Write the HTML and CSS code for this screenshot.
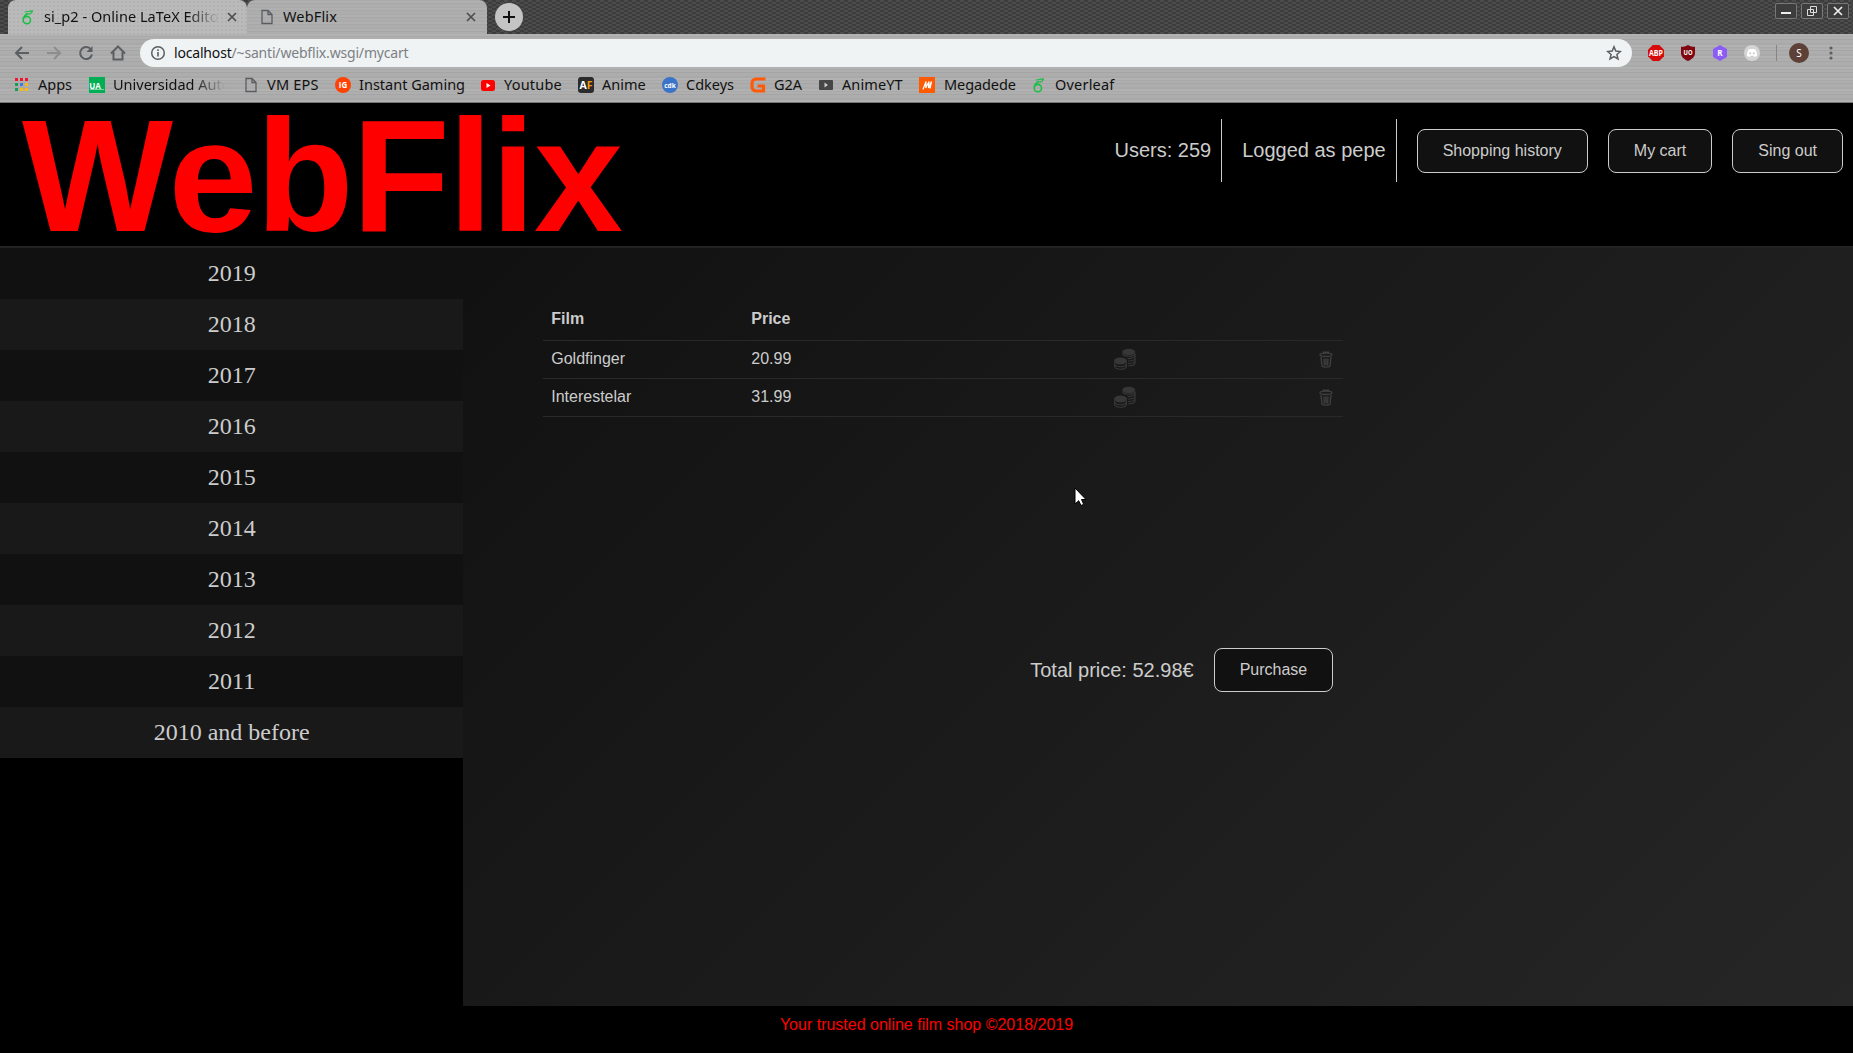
FILE: index.html
```html
<!DOCTYPE html>
<html lang="en">
<head>
<meta charset="utf-8">
<title>WebFlix</title>
<link rel="stylesheet" href="styles.css">
</head>
<body>
<svg class="defs" width="0" height="0">
  <symbol id="overleaf" viewBox="0 0 12 16"><path d="M6.500 3.600C3.500 4.800 1.300 8 1.300 11a4 4 0 1 0 4-4.200C4 6.800 2.800 7.500 2 8.600" fill="none" stroke="#17bf45" stroke-width="1.700"/><path d="M3 1.800C5 2.600 8 .6 11.500.8 11 3.300 8.500 4.500 6 4" fill="none" stroke="#17bf45" stroke-width="1.200"/></symbol>
  <symbol id="page" viewBox="0 0 12 16"><path d="M1 1.500h6l4 4v9H1zM7 1.500v4h4" fill="none" stroke="#5a5c5f" stroke-width="1.300"/></symbol>
  <symbol id="cross" viewBox="0 0 10 10"><path d="M1 1l8 8M9 1L1 9" stroke="#4c4e50" stroke-width="1.700"/></symbol>
  <symbol id="coins" viewBox="0 0 22 22">
    <g fill="#373737"><ellipse cx="14.700" cy="4" rx="6.500" ry="3.300"/><ellipse cx="6.500" cy="13" rx="6.500" ry="3.500"/></g>
    <g fill="none" stroke="#373737" stroke-width="1.100"><path d="M8.300 5.500c1 3.600 11.800 3.600 12.800 0v2.300c-.6 2.100-4.500 3-7.500 2.700M14 13c3.500.2 6.500-.8 7.100-2.600V8M14 15.500c3.500.2 6.500-.8 7.100-2.600v-2.500M14 17.700c3.500.2 6.500-.8 7.100-2.500v-2.500"/><path d="M.5 14.500v4c1 3.600 11 3.600 12 0v-4M.5 16c1 3.600 11 3.600 12 0"/></g>
  </symbol>
  <symbol id="trash" viewBox="0 0 14 17"><g fill="none" stroke="#3f3f3f" stroke-width="1.400"><ellipse cx="7" cy="3.800" rx="6" ry="1.700"/><path d="M4.500 3V1.200h5V3M2 6l1 9.200c1.500 1.200 6.500 1.200 8 0L12 6M5 7.500l.4 7M7 7.500v7M9 7.500l-.4 7"/></g></symbol>
</svg>

<div class="tabstrip">
  <div class="tab tab-back">
    <svg class="tab-icon" width="11" height="15"><use href="#overleaf"/></svg>
    <span class="tab-title fade"><span class="t-a">si_p2 - Online LaTeX Edito</span></span>
    <svg class="tab-close" width="10" height="10"><use href="#cross"/></svg>
  </div>
  <div class="tab tab-active">
    <svg class="tab-icon" width="12" height="16"><use href="#page"/></svg>
    <span class="tab-title">WebFlix</span>
    <svg class="tab-close" width="10" height="10"><use href="#cross"/></svg>
  </div>
  <svg class="newtab" width="28" height="28"><circle cx="14" cy="14" r="14" fill="#c4c4c4"/><path d="M14 8v12M8 14h12" stroke="#111" stroke-width="2"/></svg>
  <div class="winbtns">
    <span class="winbtn"><svg width="20" height="14"><path d="M5 9h10" stroke="#eee" stroke-width="2"/></svg></span>
    <span class="winbtn"><svg width="20" height="14"><path d="M8.500 2.500h6v6h-6zM5.500 5.500h6v6h-6z" fill="none" stroke="#ddd"/></svg></span>
    <span class="winbtn"><svg width="20" height="14"><path d="M6 3l8 8M14 3l-8 8" stroke="#eee" stroke-width="1.700"/></svg></span>
  </div>
</div>

<div class="chrome">
  <div class="toolbar">
    <div class="nav">
      <svg width="16" height="16"><path d="M15 8H2M8 2L2 8l6 6" fill="none" stroke="#5b5e62" stroke-width="2"/></svg>
      <svg width="16" height="16"><path d="M1 8h13M8 2l6 6-6 6" fill="none" stroke="#8c8d8f" stroke-width="2"/></svg>
      <svg width="16" height="16"><path d="M13 4.500A6 6 0 1 0 14 9.500" fill="none" stroke="#5b5e62" stroke-width="2"/><path d="M14.500 1v6h-6z" fill="#5b5e62"/></svg>
      <svg width="16" height="16"><path d="M1 8.500L8 1.500l7 7M3.500 7v7.500h9V7" fill="none" stroke="#5b5e62" stroke-width="2"/></svg>
    </div>
    <div class="urlbar">
      <svg width="16" height="16"><circle cx="8" cy="8" r="6.300" fill="none" stroke="#5b5e62" stroke-width="1.500"/><path d="M8 7v4.500M8 4.300v1.700" stroke="#5b5e62" stroke-width="1.600"/></svg>
      <span class="url">localhost<span class="path">/~santi/webflix.wsgi/mycart</span></span>
      <svg class="star" width="16" height="16"><path d="M8 1.800l1.800 4.300 4.600.4-3.500 3 1.100 4.500L8 11.600 4 14l1.100-4.500-3.500-3 4.600-.4z" fill="none" stroke="#5b5e62" stroke-width="1.500"/></svg>
    </div>
    <div class="exts">
      <svg width="16" height="16"><path d="M4.700 0h6.600L16 4.700v6.600L11.300 16H4.700L0 11.300V4.700z" fill="#d60a0a"/><text x="8" y="10.800" class="g g8" textLength="14" lengthAdjust="spacingAndGlyphs">ABP</text></svg>
      <svg width="16" height="16"><path d="M8 0c2 1.300 4.500 1.800 7 1.800V8c0 4-3.500 6.500-7 8-3.500-1.500-7-4-7-8V1.800C3.500 1.800 6 1.300 8 0z" fill="#800610"/><text x="8" y="10.300" class="g g7" textLength="9" lengthAdjust="spacingAndGlyphs">UO</text></svg>
      <svg width="16" height="16"><path d="M8 0l7 4v8l-7 4-7-4V4z" fill="#8b5cf6"/><text x="8" y="11" class="g g8">R</text></svg>
      <svg width="16" height="16"><circle cx="8" cy="8" r="8" fill="#d4d4d4"/><path d="M4.500 4.500Q8 3.300 11.500 4.500 13.500 8 13 11l-2.500 1-1-1.200h-3l-1 1.200L3 11q-.5-3 1.500-6.500z" fill="#fff"/><circle cx="6.200" cy="8.300" r="1.100" fill="#ccc"/><circle cx="9.800" cy="8.300" r="1.100" fill="#ccc"/></svg>
    </div>
    <span class="sep"></span>
    <span class="avatar">S</span>
    <svg class="dots" width="4" height="16" fill="#5b5e62"><circle cx="2" cy="3" r="1.600"/><circle cx="2" cy="8" r="1.600"/><circle cx="2" cy="13" r="1.600"/></svg>
  </div>

  <div class="bookmarks">
    <a class="bm bm-apps"><svg width="14" height="14"><path d="M0 0h3v3H0zM5 0h3v3H5zM10 0h3v3h-3z" fill="#f0142f"/><path d="M0 5h3v3H0zM0 10h3v3H0z" fill="#13a052"/><path d="M5 5h3v3H5z" fill="#3d7bea"/><path d="M10 5h3v3h-3zM5 10h3v3H5zM10 10h3v3h-3z" fill="#fdb90b"/></svg><span>Apps</span></a>
    <a class="bm bm-uam"><svg width="16" height="16"><path d="M0 0h16v16H0z" fill="#00ae54"/><text x="6" y="11.500" class="g g8">UA</text><path d="M1 12.500h14" stroke="#7fd6a6"/></svg><span class="fade">Universidad Auto</span></a>
    <a class="bm bm-vm"><svg width="12" height="16"><use href="#page"/></svg><span>VM EPS</span></a>
    <a class="bm bm-ig"><svg width="16" height="16"><circle cx="8" cy="8" r="8" fill="#ff4200"/><text x="8" y="11" class="g g8">IG</text></svg><span>Instant Gaming</span></a>
    <a class="bm bm-yt"><svg width="14" height="16"><rect y="3" width="14" height="11" rx="2.500" fill="#f00"/><path d="M5.500 6v5L9.500 8.500z" fill="#fff"/></svg><span>Youtube</span></a>
    <a class="bm bm-af"><svg width="16" height="16"><rect width="16" height="16" rx="3" fill="#2b2b2b"/><text x="8" y="12.300" class="g g11" textLength="13" lengthAdjust="spacingAndGlyphs">A<tspan fill="#f39a12">F</tspan></text></svg><span>Anime</span></a>
    <a class="bm bm-cdk"><svg width="16" height="16"><circle cx="8" cy="8" r="8" fill="#3b73c8"/><text x="8" y="10.700" class="g g7" textLength="11.500" lengthAdjust="spacingAndGlyphs">cdk</text></svg><span>Cdkeys</span></a>
    <a class="bm bm-g2a"><svg width="16" height="16"><path d="M15.500 2H6.500Q2 2 2 6.500v3Q2 14 6.500 14h7V9H7.500" fill="none" stroke="#ff5a0a" stroke-width="3.200"/></svg><span>G2A</span></a>
    <a class="bm bm-ayt"><svg width="14" height="16"><rect y="3" width="14" height="10" rx="1" fill="#464646"/><path d="M5.500 5.500v5L9 8z" fill="#ccc"/></svg><span>AnimeYT</span></a>
    <a class="bm bm-mega"><svg width="16" height="16"><path d="M0 0h16v16H0z" fill="#ff5a00"/><path d="M4 12.500L7 4.500l-.2 6.500L10 4.500l-.5 6.500 3-6.500-1.500 7" fill="none" stroke="#fff" stroke-width="1.200"/></svg><span>Megadede</span></a>
    <a class="bm bm-ovl"><svg width="11" height="15"><use href="#overleaf"/></svg><span>Overleaf</span></a>
  </div>
</div>

<header class="site-header">
  <h1 class="logo">WebFlix</h1>
  <div class="account">
    <span class="stat">Users: 259</span>
    <span class="stat stat-user">Logged as pepe</span>
    <a class="btn">Shopping history</a>
    <a class="btn">My cart</a>
    <a class="btn">Sing out</a>
  </div>
</header>

<div class="content">
  <nav class="years">
    <a>2019</a><a>2018</a><a>2017</a><a>2016</a><a>2015</a><a>2014</a><a>2013</a><a>2012</a><a>2011</a><a>2010 and before</a>
  </nav>
  <main class="cart">
    <table>
      <thead><tr><th>Film</th><th>Price</th><th></th><th></th></tr></thead>
      <tbody>
        <tr><td>Goldfinger</td><td>20.99</td><td class="c-coins"><svg width="22" height="22"><use href="#coins"/></svg></td><td class="c-trash"><svg width="14" height="17"><use href="#trash"/></svg></td></tr>
        <tr><td>Interestelar</td><td>31.99</td><td class="c-coins"><svg width="22" height="22"><use href="#coins"/></svg></td><td class="c-trash"><svg width="14" height="17"><use href="#trash"/></svg></td></tr>
      </tbody>
    </table>
    <div class="checkout"><span class="total">Total price: 52.98€</span><a class="btn">Purchase</a></div>
  </main>
</div>
<footer class="site-footer">Your trusted online film shop ©2018/2019</footer>
<svg class="cursor" width="14" height="20"><path d="M1 1v16l3.700-3.300L7 18.500l2.700-1.200L7.500 12.500H12z" fill="#fff" stroke="#000"/></svg>
</body>
</html>
```

FILE: styles.css
```css
* { box-sizing: border-box; }
body { margin: 0; width: 1853px; height: 1053px; overflow: hidden; display: flex; flex-direction: column; background: #000; color: #ccc; font: 16px/24px "Liberation Sans", Arial, sans-serif; }
svg { display: block; flex: none; }
.defs { position: absolute; }

/* browser frame */
.tabstrip, .chrome { font: 14.5px/20px "Noto Sans", "Open Sans", sans-serif; color: #111; white-space: nowrap; }
.tabstrip { height: 34px; flex: none; display: flex; padding-left: 8px; background: conic-gradient(#3c3c3c 25%, #4c4c4c 0 50%, #3c3c3c 0 75%, #4c4c4c 0) 0 0 / 8px 4px; }
.tab { display: flex; align-items: center; height: 34px; border-radius: 8px 8px 0 0; }
.tab-back { width: 239px; padding: 0 11px 0 14px; background: #bababa radial-gradient(#b1b1b1 1px, transparent 1px) 0 0 / 4px 4px; }
.tab-active { width: 240px; padding: 0 11px 0 14px; background: repeating-linear-gradient(#aaa 0 1px, #b0b0b0 1px 3px, #a7a7a7 3px 4px, #adadad 4px 7px); }
.tab-title { flex: 1; margin-left: 10px; padding-bottom: 2px; overflow: hidden; }
.tab-active .tab-title { letter-spacing: .15px; }
.tab-back .tab-title { flex: none; width: 175px; margin-left: 11px; margin-right: 8px; }
.t-a { letter-spacing: .05px; }
.tab-close { margin-left: auto; }
.fade { overflow: hidden; -webkit-mask-image: linear-gradient(to right, #000 calc(100% - 32px), transparent); mask-image: linear-gradient(to right, #000 calc(100% - 32px), transparent); }
.newtab { margin: 3px 0 0 8px; }
.winbtns { display: flex; gap: 4px; margin: 3px 4px 0 auto; }
.winbtn { width: 22px; height: 16px; border: 1px solid #777; border-radius: 2px; background: #3d3d3d; }

.chrome { height: 69px; flex: none; border-bottom: 1px solid #777; background: repeating-linear-gradient(#b2b2b2 0 2px, #a9a9a9 2px 3px, #afafaf 3px 5px, #a5a5a5 5px 6px, #adadad 6px 9px, #a9a9a9 9px 11px); }
.toolbar { display: flex; align-items: center; height: 38px; padding-left: 14px; }
.nav { display: flex; gap: 16px; width: 126px; }
.urlbar { display: flex; align-items: center; width: 1492px; height: 28px; padding: 0 10px; border-radius: 14px; background: #eff3f4; }
.url { margin-left: 8px; font-size: 14px; letter-spacing: -.18px; }
.path { color: #7c8084; }
.star { margin-left: auto; }
.exts { display: flex; gap: 16px; margin-left: 16px; }
.sep { width: 1px; height: 16px; margin-left: 16px; background: #858585; }
.avatar { width: 20px; height: 20px; margin-left: 12px; border-radius: 50%; background: #5d4037; color: #fff; font-size: 10px; text-align: center; }
.dots { margin-left: 20px; }
.g { font-family: "Open Sans", sans-serif; font-weight: 700; fill: #fff; text-anchor: middle; }
.g7 { font-size: 7px; }
.g8 { font-size: 8px; }
.g11 { font-size: 11px; }

.bookmarks { display: flex; align-items: center; height: 26px; padding-left: 15px; }
.bm { display: flex; align-items: center; gap: 8px; flex: none; height: 26px; }
.bm span { padding-bottom: 2px; }
.bm-apps { width: 74px; gap: 9px; }
.bm-uam { width: 156px; }
.bm-uam span { width: 112px; }
.bm-vm { width: 90px; gap: 10px; letter-spacing: .2px; }
.bm-ig { width: 146px; }
.bm-yt { width: 97px; gap: 9px; letter-spacing: .2px; }
.bm-af { width: 84px; }
.bm-cdk { width: 88px; }
.bm-g2a { width: 69px; }
.bm-ayt { width: 100px; gap: 9px; letter-spacing: .1px; }
.bm-mega { width: 114px; gap: 9px; letter-spacing: -.1px; }
.bm-ovl { gap: 11px; letter-spacing: .2px; }

/* site */
.site-header { display: flex; justify-content: space-between; height: 145px; flex: none; padding: 0 10px 0 22px; border-bottom: 2px solid #222; background: #000; }
.logo { margin: 0; color: #f00; font-size: 160px; line-height: 145px; letter-spacing: -1.6px; white-space: nowrap; }
.account { display: flex; align-items: center; height: 63px; margin-top: 16px; }
.stat { height: 63px; padding-right: 10px; border-right: 1px solid #ccc; font-size: 20px; line-height: 62px; }
.stat-user { margin-left: 20px; }
.btn { height: 44px; margin-left: 20px; padding: 0 25px; border: 1px solid #ccc; border-radius: 8px; background: #111; line-height: 42px; }
.content { display: flex; height: 758px; flex: none; }
.years { display: flex; flex-direction: column; width: 25%; background: #000; }
.years a { height: 51px; background: #111; font: 24px/51px "Liberation Serif", "Times New Roman", serif; text-align: center; }
.years a:nth-child(even) { background: #191919; }
.cart { flex: 1; padding: 46px 0 0 80px; background: linear-gradient(135deg, #111, #262626); }
table { width: 800px; table-layout: fixed; border-collapse: collapse; text-align: left; }
th { height: 46px; padding: 5px 8px 0; border-bottom: 1px solid #292929; }
td { height: 38px; padding: 0 8px 1px; border-bottom: 1px solid #292929; }
.c-coins svg { margin: 1px auto 0 163px; }
.c-trash svg { margin: 1px 2px 0 auto; }
.checkout { display: flex; align-items: center; justify-content: flex-end; width: 790px; margin-top: 231px; }
.total { font-size: 20px; }
.site-footer { padding-top: 7px; color: #f00; line-height: 24px; text-align: center; }
.cursor { position: absolute; left: 1074px; top: 487px; }
```
